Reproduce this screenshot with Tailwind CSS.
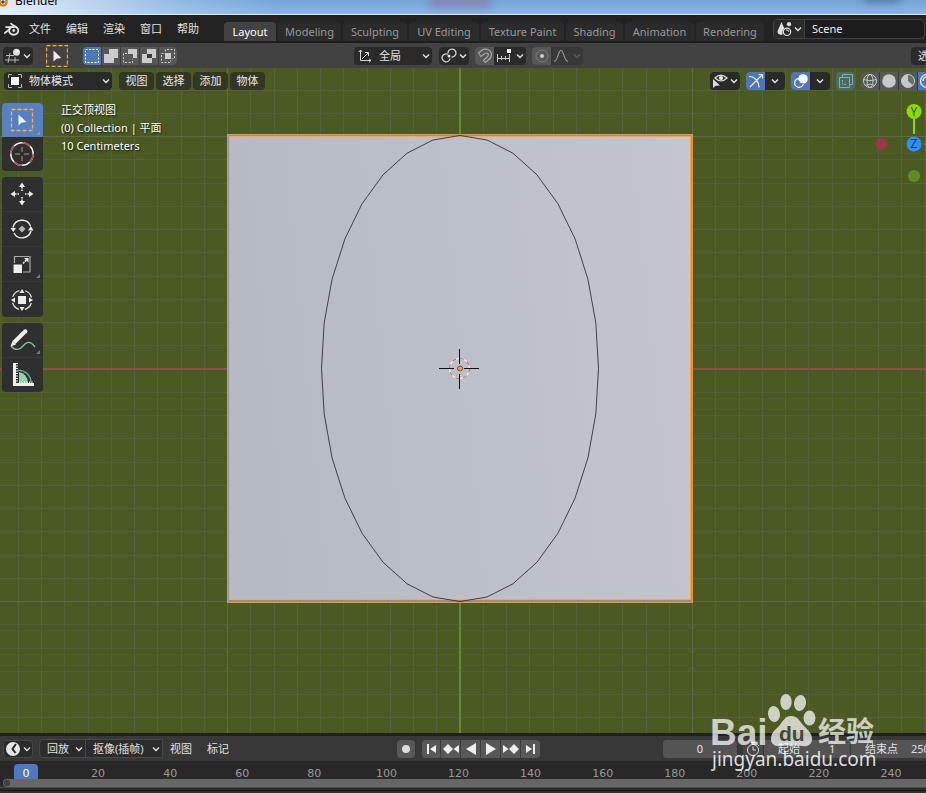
<!DOCTYPE html>
<html lang="zh-CN">
<head>
  <meta charset="UTF-8">
  <meta name="viewport" content="width=device-width, initial-scale=1.0">
  <title>Blender</title>
  <script src="https://cdn.jsdelivr.net/npm/@tailwindcss/browser@4"></script>
</head>
<body class="h-screen overflow-hidden bg-[#1f1f1f] font-['Noto_Sans','Noto_Sans_CJK_SC',sans-serif] text-[11px] leading-4 text-[#e0e0e0]">
  <svg class="hidden">
    <symbol id="chevron" viewBox="0 0 8 8"><path d="M1 2.5 4 5.5 7 2.5" fill="none" stroke="currentColor" stroke-width="1.4"/></symbol>
  </svg>

  <div class="relative flex h-full flex-col">
    <!-- Window title -->
    <div class="relative flex h-4 shrink-0 items-start overflow-hidden border-b border-[#16202b] bg-linear-to-b from-[#74a5da] to-[#8ab6e6]">
      <div class="absolute inset-0 bg-linear-to-r from-white/80 via-white/20 via-20% to-transparent to-30%"></div>
      <div class="absolute -top-1 left-[428px] h-3 w-16 rounded-full bg-[#8d6f9c]/60 blur-xs"></div>
      <div class="absolute -top-2 right-6 h-2.5 w-10 rounded-full bg-[#3d5f85]/70 blur-xs"></div>
      <svg class="relative -mt-1 h-3 w-3 -ml-1 shrink-0" viewBox="0 0 12 12"><circle cx="7" cy="6" r="3.6" fill="#fff" stroke="#e87d0d" stroke-width="2.4"/><circle cx="7" cy="6" r="1.8" fill="#265787"/></svg>
      <span class="relative -mt-[7px] ml-[7px] text-xs text-black">Blender</span>
      <div class="absolute inset-x-0 bottom-0 h-px bg-[#dcecfb]"></div>
    </div>

    <!-- Top bar -->
    <header class="flex h-[27px] shrink-0 items-start overflow-hidden border-b-2 border-[#1d1d1d] bg-[#232323]">
      <svg class="mt-1.5 ml-1 h-4 w-4 shrink-0" viewBox="0 0 16 16" fill="none" stroke="#e0e0e0" stroke-linecap="round">
        <ellipse cx="9.7" cy="8.6" rx="4.6" ry="4.1" stroke-width="1.9"/><path d="M7 1.6 12.8 5.7M2 5.1h8M.8 11 6.5 6.4" stroke-width="1.7"/><circle cx="9.8" cy="8.5" r="1.4" fill="#e0e0e0" stroke="none"/>
      </svg>
      <nav class="mt-[5px] ml-[9px] flex shrink-0 gap-[15px]">
        <button>文件</button><button>编辑</button><button>渲染</button><button>窗口</button><button>帮助</button>
      </nav>
      <nav class="mt-1.5 ml-[25px] flex h-[19px] shrink-0 gap-0.5 text-[#989898]">
        <button class="w-[52px] rounded-t bg-[#424242] text-white">Layout</button>
        <button class="w-[63px] rounded-t bg-[#2b2b2b]">Modeling</button>
        <button class="w-16 rounded-t bg-[#2b2b2b]">Sculpting</button>
        <button class="w-[70px] rounded-t bg-[#2b2b2b]">UV Editing</button>
        <button class="w-[83px] rounded-t bg-[#2b2b2b]">Texture Paint</button>
        <button class="w-[57px] rounded-t bg-[#2b2b2b]">Shading</button>
        <button class="w-[69px] rounded-t bg-[#2b2b2b]">Animation</button>
        <button class="w-[68px] rounded-t bg-[#2b2b2b]">Rendering</button>
      </nav>
      <div class="mt-[3px] mr-px ml-[9px] flex h-5 min-w-0 flex-1 overflow-hidden rounded border border-[#424242] bg-[#1d1d1d]">
        <button aria-label="Browse scene" class="flex w-[31px] shrink-0 items-center justify-center gap-0.5 border-r border-[#424242] bg-[#2a2a2a]">
          <svg class="h-4 w-4" viewBox="0 0 16 16" fill="#e0e0e0"><path d="M5.5 1 8.5 8C7 8 6 10 6.6 13.5 3 14.5.8 12 1.8 9.5Z"/><circle cx="13" cy="3.2" r="2.1"/><circle cx="11" cy="10.8" r="3.7" fill="#2a2a2a" stroke="#e0e0e0" stroke-width="1.2"/><path d="M10 9a2.4 2.4 0 0 1 3 2" stroke="#e0e0e0" fill="none"/></svg>
          <svg class="h-2 w-2"><use href="#chevron"/></svg>
        </button>
        <input aria-label="Scene name" value="Scene" class="w-full min-w-0 bg-transparent px-[7px] text-[#eee] outline-none">
      </div>
    </header>

    <!-- Tool settings -->
    <div class="flex h-[25px] shrink-0 items-center overflow-hidden bg-[#424242]">
      <button aria-label="Editor type" class="ml-[3px] flex h-[18px] w-[30px] shrink-0 items-center justify-center gap-0.5 rounded bg-[#2a2a2a]">
        <svg class="h-4 w-4" viewBox="0 0 16 16" fill="none" stroke="#b5b5b5"><path d="M1 7.5h8M0 12h14M5 5 3 15M10 9v6"/><circle cx="11.5" cy="4.2" r="3.5" fill="#dcdcdc" stroke="none"/><circle cx="12.5" cy="3" r="1" fill="#fff" stroke="none"/></svg>
        <svg class="h-2 w-2"><use href="#chevron"/></svg>
      </button>
      <button aria-label="Active tool" class="ml-[13px] shrink-0">
        <svg class="h-[22px] w-[22px]" viewBox="0 0 22 22"><rect x=".5" y=".5" width="21" height="21" fill="none" stroke="#ffa52e" stroke-width="1.3" stroke-dasharray="4 2"/><path d="M7.5 5.5v11l3-2.8 4.8-.8Z" fill="#eee"/></svg>
      </button>
      <div class="ml-[15px] flex h-[18px] shrink-0 gap-px overflow-hidden rounded bg-[#3a3a3a]">
        <button aria-label="Set" class="flex w-[18px] items-center justify-center bg-[#4f76b8]"><svg class="h-4 w-4" viewBox="0 0 16 16"><rect x="1.5" y="1.5" width="13" height="13" fill="none" stroke="#fff" stroke-dasharray="2 1.5"/></svg></button>
        <button aria-label="Extend" class="flex w-[18px] items-center justify-center bg-[#575757]"><svg class="h-4 w-4" viewBox="0 0 16 16"><path d="M6 1h9v9h-4v5H1V6h5Z" fill="#ccc"/></svg></button>
        <button aria-label="Subtract" class="flex w-[18px] items-center justify-center bg-[#575757]"><svg class="h-4 w-4" viewBox="0 0 16 16"><path d="M6 1h9v9h-4V6H6Z" fill="#ccc"/><path d="M5 5.5H1.5v9h9V11" fill="none" stroke="#ccc" stroke-dasharray="2 1.5"/></svg></button>
        <button aria-label="Invert" class="flex w-[18px] items-center justify-center bg-[#575757]"><svg class="h-4 w-4" viewBox="0 0 16 16"><path d="M6 1h9v9h-4v5H1V6h5Z" fill="#ccc"/><path d="M6 6h5v4H6Z" fill="#3a3a3a"/></svg></button>
        <button aria-label="Intersect" class="flex w-[18px] items-center justify-center bg-[#575757]"><svg class="h-4 w-4" viewBox="0 0 16 16"><path d="M5 5h6v6H5Z" fill="#ccc"/><path d="M5.5 3.5v-2h9v9h-2M3.5 5.5h-2v9h9v-2" fill="none" stroke="#ccc" stroke-dasharray="2 1.5"/></svg></button>
      </div>
      <div class="relative ml-[177px] h-[18px] w-[78px] shrink-0">
        <select aria-label="Transform orientation" class="h-full w-full appearance-none rounded bg-[#2a2a2a] pl-[25px] outline-none"><option>全局</option></select>
        <svg class="pointer-events-none absolute top-0.5 left-1 h-3.5 w-3.5" viewBox="0 0 14 14" fill="none" stroke="#d5d5d5"><path d="M2.5 1v10.5H13M.8 3 2.5 1l1.7 2M11 9.8l2 1.7-2 1.7M4 10l6-6M7 3.5h3.5V7"/></svg>
        <svg class="pointer-events-none absolute top-[5px] right-0.5 h-2 w-2"><use href="#chevron"/></svg>
      </div>
      <button aria-label="Pivot point" class="ml-[7px] flex h-[18px] w-[30px] shrink-0 items-center justify-center gap-0.5 rounded bg-[#2a2a2a]">
        <svg class="h-4 w-4" viewBox="0 0 16 16" fill="none" stroke="#d5d5d5" stroke-width="1.3"><path d="M7 6.3A4 4 0 1 0 9 10.5"/><path d="M7 5.5A4 4 0 1 1 10.5 9"/><circle cx="8" cy="8" r="1.5" fill="#eee" stroke="none"/></svg>
        <svg class="h-2 w-2"><use href="#chevron"/></svg>
      </button>
      <div class="ml-1.5 flex h-[18px] w-[51px] shrink-0 overflow-hidden rounded bg-[#2a2a2a]">
        <button aria-label="Snap" class="flex w-[19px] items-center justify-center bg-[#575757]"><svg class="h-4 w-4" viewBox="0 0 16 16" fill="none" stroke="#a8a8a8" stroke-width="1.2"><path d="M1.5 5 5 2.2C8 .2 12.5 1 14 4.5c1.3 3-.4 5.5-2.5 7.3L8.5 14.5 6.5 12.3l3.3-3c1.5-1.4 1.9-2.6 1.1-3.6-.8-1-2.2-.9-3.6.3L3.8 8.5Z"/></svg></button>
        <button aria-label="Snap to" class="flex flex-1 items-center justify-center gap-1"><svg class="h-4 w-4" viewBox="0 0 16 16"><path d="M1.5 6v8M5.5 8v4M9.5 8v4M13.5 6v8M1 10.5h13" stroke="#c8c8c8" fill="none"/><path d="M11 1h4v4h-4Z" fill="#fff"/></svg><svg class="h-2 w-2"><use href="#chevron"/></svg></button>
      </div>
      <div class="ml-1.5 flex h-[18px] w-[51px] shrink-0 overflow-hidden rounded bg-[#383838]">
        <button aria-label="Proportional editing" class="flex w-[19px] items-center justify-center bg-[#575757]"><svg class="h-4 w-4" viewBox="0 0 16 16"><circle cx="8" cy="8" r="6" fill="none" stroke="#7c7c7c"/><circle cx="8" cy="8" r="2" fill="#ccc"/></svg></button>
        <button aria-label="Falloff" class="flex flex-1 items-center justify-center gap-1 text-[#5d5d5d]"><svg class="h-4 w-4" viewBox="0 0 16 16"><path d="M1 13.5C5 13.5 5 2.5 8 2.5s3 11 7 11" fill="none" stroke="#999" stroke-width="1.2"/></svg><svg class="h-2 w-2"><use href="#chevron"/></svg></button>
      </div>
      <button class="-mr-6 ml-auto h-[18px] w-[39px] shrink-0 rounded bg-[#2a2a2a] pl-[7px] text-left">选项</button>
    </div>

    <!-- 3D viewport -->
    <main class="relative min-h-0 flex-1 overflow-hidden bg-[#4b5a22]">
      <svg class="absolute inset-0 h-full w-full" viewBox="0 68 926 665" preserveAspectRatio="xMidYMid slice">
        <defs>
          <linearGradient id="plane" x1="0" y1=".1" x2="1" y2="0"><stop offset="0" stop-color="#b5bac4"/><stop offset="1" stop-color="#c3c6cd"/></linearGradient>
        </defs>
        <g id="grid" shape-rendering="crispEdges"></g>
        <g shape-rendering="crispEdges">
          <rect x="0" y="368" width="926" height="1" fill="#b03a4c"/>
          <rect x="459" y="68" width="2" height="665" fill="#628a28"/>
          <!-- selected plane: outline, gap, outline, face -->
          <rect x="227" y="134" width="466" height="469" fill="#f0953a"/>
          <rect x="228" y="135" width="464" height="467" fill="#94928c"/>
          <rect x="229" y="136" width="462" height="464" fill="#ffa54a"/>
          <rect x="230" y="137" width="460" height="462" fill="url(#plane)"/>
        </g>
        <polygon id="outline" fill="none" stroke="#222" stroke-width=".8"/>
        <g fill="none">
          <circle cx="459.5" cy="368.5" r="10" stroke="#f2f2f2" stroke-width="1.2"/>
          <circle cx="459.5" cy="368.5" r="10" stroke="#ff5757" stroke-width="1.2" stroke-dasharray="3.93"/>
          <path d="M439 368.5h15M464 368.5h15M459.5 349v15M459.5 374v15" stroke="#111"/>
          <circle cx="460" cy="368.5" r="2.5" fill="#ff9a2e" stroke="#5a5a5a"/>
        </g>
      </svg>

      <div class="relative flex h-full flex-col">
        <div class="flex h-[26px] shrink-0 items-center text-[#e6e6e6]">
          <div class="relative ml-1 h-[18px] w-[108px] shrink-0">
            <select aria-label="Mode" class="h-full w-full appearance-none rounded bg-[#2a2a2a] pl-[25px] outline-none"><option>物体模式</option></select>
            <svg class="pointer-events-none absolute top-0.5 left-1 h-3.5 w-3.5" viewBox="0 0 14 14"><path d="M3 3h8v8H3Z" fill="#fff"/><path d="M.5 4V.5H4M10 .5h3.5V4M13.5 10v3.5H10M4 13.5H.5V10" fill="none" stroke="#b5b5b5"/></svg>
            <svg class="pointer-events-none absolute top-[5px] right-0.5 h-2 w-2"><use href="#chevron"/></svg>
          </div>
          <nav class="ml-[7px] flex shrink-0 gap-0.5">
            <button class="h-[18px] w-[35px] rounded bg-[#323624]">视图</button>
            <button class="h-[18px] w-[35px] rounded bg-[#323624]">选择</button>
            <button class="h-[18px] w-[35px] rounded bg-[#323624]">添加</button>
            <button class="h-[18px] w-[35px] rounded bg-[#323624]">物体</button>
          </nav>
          <div class="-mr-2.5 ml-auto flex h-[18px] shrink-0">
            <button aria-label="Visibility" class="flex w-[30px] items-center justify-center gap-0.5 rounded bg-[#2a2a2a]">
              <svg class="h-4 w-4" viewBox="0 0 16 16"><path d="M3 5Q9-.8 15 5 9 10.8 3 5Z" fill="none" stroke="#ddd" stroke-width="1.3"/><circle cx="9" cy="5" r="2.1" fill="#eee"/><path d="M1 6v9l2.5-2.2L8 12.5Z" fill="#ddd"/></svg>
              <svg class="h-2 w-2"><use href="#chevron"/></svg>
            </button>
            <div class="ml-1.5 flex w-[39px] overflow-hidden rounded bg-[#2a2a2a]">
              <button aria-label="Gizmos" class="flex w-[19px] items-center justify-center bg-[#4f76b8]"><svg class="h-4 w-4" viewBox="0 0 16 16" fill="none" stroke="#eee" stroke-width="1.2"><path d="M1 3.5c6 0 10 5 10 11M2 14 14.5 1.5M10.5 1.5h4v4"/></svg></button>
              <button aria-label="Gizmo options" class="flex flex-1 items-center justify-center"><svg class="h-2 w-2"><use href="#chevron"/></svg></button>
            </div>
            <div class="ml-1.5 flex w-[39px] overflow-hidden rounded bg-[#2a2a2a]">
              <button aria-label="Overlays" class="flex w-[19px] items-center justify-center bg-[#4f76b8]"><svg class="h-4 w-4" viewBox="0 0 16 16"><circle cx="10" cy="6" r="4.8" fill="#fff"/><circle cx="6" cy="10" r="4.3" fill="none" stroke="#fff" stroke-width="1.2"/><path d="M5.5 7.5a4.7 4.7 0 0 0 5 3.2" fill="none" stroke="#4f76b8"/></svg></button>
              <button aria-label="Overlay options" class="flex flex-1 items-center justify-center"><svg class="h-2 w-2"><use href="#chevron"/></svg></button>
            </div>
            <button aria-label="X-ray" class="ml-1.5 flex w-[19px] items-center justify-center rounded bg-[#4b6a66]"><svg class="h-4 w-4" viewBox="0 0 16 16" fill="none" stroke="#7fb0ad"><path d="M4.5 4.5V1.5h10v10h-3M1.5 4.5h10v10h-10Z"/><path d="M4.5 7v4.5H9" stroke-dasharray="2 1"/></svg></button>
            <div class="ml-1.5 flex gap-px overflow-hidden rounded bg-[#3a3a3a]">
              <button aria-label="Wireframe" class="flex w-[18px] items-center justify-center bg-[#575757]"><svg class="h-4 w-4" viewBox="0 0 16 16" fill="none" stroke="#c8c8c8"><circle cx="8" cy="8" r="6.5"/><ellipse cx="8" cy="8" rx="3" ry="6.5"/><path d="M1.5 6.5Q8 9 14.5 6.5M3 12.5Q8 9.5 13 12.5"/></svg></button>
              <button aria-label="Solid" class="flex w-[18px] items-center justify-center bg-[#575757]"><svg class="h-4 w-4" viewBox="0 0 16 16"><circle cx="8" cy="8" r="6.8" fill="#c8c8c8"/></svg></button>
              <button aria-label="Material" class="flex w-[18px] items-center justify-center bg-[#575757]"><svg class="h-4 w-4" viewBox="0 0 16 16"><circle cx="8" cy="8" r="6.5" fill="#c8c8c8" stroke="#c8c8c8"/><path d="M8 2v6l4.5 4A6 6 0 0 0 8 2Z" fill="#6d6d6d"/></svg></button>
              <button aria-label="Rendered" class="flex w-[18px] items-center justify-center bg-[#4f76b8]"><svg class="h-4 w-4" viewBox="0 0 16 16" fill="none" stroke="#fff" stroke-width="1.2"><circle cx="8" cy="8" r="6.5"/><path d="M4 8a4 4 0 0 1 4-4"/></svg></button>
            </div>
          </div>
        </div>

        <div class="mt-[9px] ml-0.5 flex items-start">
          <div class="flex w-[41px] flex-col gap-1.5">
            <div class="flex flex-col overflow-hidden rounded bg-[#2f2f2f]">
              <button aria-label="Select box" class="relative flex h-[34px] items-center justify-center bg-[#5680c2] pr-0.5">
                <svg class="h-6 w-6" viewBox="0 0 24 24"><rect x="1.5" y="1.5" width="21" height="21" fill="none" stroke="#ffb13d" stroke-width="1.3" stroke-dasharray="4 2"/><path d="M8.5 6.5v11l3-2.8 5-.7Z" fill="#eee"/></svg>
                <svg class="absolute right-[3px] bottom-0.5 h-1 w-1" viewBox="0 0 4 4"><path d="M4 0v4H0Z" fill="#8b98ad"/></svg>
              </button>
              <button aria-label="Cursor" class="flex h-[34px] items-center justify-center pr-0.5">
                <svg class="h-7 w-7" viewBox="0 0 28 28" fill="none"><circle cx="14" cy="14" r="11.2" stroke="#f0f0f0" stroke-width="1.5"/><circle cx="14" cy="14" r="11.2" stroke="#b04a52" stroke-width="1.5" stroke-dasharray="8.8"/><path d="M14 7v5M14 16v5M7 14h5M16 14h5" stroke="#9a9a9a"/></svg>
              </button>
            </div>
            <div class="flex flex-col divide-y divide-[#383838] overflow-hidden rounded bg-[#2f2f2f]">
              <button aria-label="Move" class="flex h-[35px] items-center justify-center pr-0.5">
                <svg class="h-6 w-6" viewBox="0 0 24 24" fill="#ececec"><path d="m12 .5 3 4.5H9ZM12 23.5l3-4.5H9ZM.5 12 5 9v6ZM23.5 12 19 9v6Z"/><path d="M12 5v4M12 15v4M5 12h4M15 12h4" stroke="#ececec" stroke-width="1.6" stroke-dasharray="1.5 1"/></svg>
              </button>
              <button aria-label="Rotate" class="flex h-[35px] items-center justify-center pr-0.5">
                <svg class="h-6 w-6" viewBox="0 0 24 24"><path d="M3 10.5A9.2 9.2 0 0 1 20.5 9M21 14A9.2 9.2 0 0 1 4 16" fill="none" stroke="#ececec" stroke-width="1.4"/><path d="M.5 11h5.5l-2.7 4ZM18 13.5h5.5L20.8 9Z" fill="#ececec"/><path d="m12 8.5 3.5 3.5-3.5 3.5L8.5 12Z" fill="#b5b5b5"/></svg>
              </button>
              <button aria-label="Scale" class="relative flex h-[35px] items-center justify-center pr-0.5">
                <svg class="h-5 w-5" viewBox="0 0 20 20"><path d="M2.5 9V2.5H18V18H11" fill="none" stroke="#a8a8a8" stroke-width="1.2"/><path d="M1.5 10.5h8.5v8.5H1.5Z" fill="#eee"/><path d="m11 9.5 4-4" stroke="#eee" stroke-width="1.6" stroke-dasharray="2 .7"/><path d="M16.5 4v4.5L12 4Z" fill="#eee"/></svg>
                <svg class="absolute right-[3px] bottom-[3px] h-1 w-1" viewBox="0 0 4 4"><path d="M4 0v4H0Z" fill="#777"/></svg>
              </button>
              <button aria-label="Transform" class="flex h-[35px] items-center justify-center pr-0.5">
                <svg class="h-6 w-6" viewBox="0 0 24 24"><circle cx="12" cy="12" r="9.8" fill="none" stroke="#ddd" stroke-width="1.3" stroke-dasharray="9.4 6" stroke-dashoffset="-3"/><path d="M8 8h8v8H8Z" fill="#ececec"/><path d="m12 1 2.5 4h-5ZM12 23l2.5-4h-5ZM1 12l4-2.5v5ZM23 12l-4-2.5v5Z" fill="#ececec"/></svg>
              </button>
            </div>
            <div class="flex flex-col divide-y divide-[#383838] overflow-hidden rounded bg-[#2f2f2f]">
              <button aria-label="Annotate" class="relative flex h-[35px] items-center justify-center pr-0.5">
                <svg class="h-6 w-7" viewBox="0 0 28 24"><path d="M3 18c4 5 9 4 12 0s7-6 12 1" fill="none" stroke="#7cc4a0" stroke-width="1.3"/><path d="m6 14.5 10-10" stroke="#eee" stroke-width="4"/><path d="M2.5 18.5 4.5 13l3.5 3.5Z" fill="#eee"/><circle cx="17.2" cy="3.5" r="2.2" fill="#eee"/></svg>
                <svg class="absolute right-[3px] bottom-[3px] h-1 w-1" viewBox="0 0 4 4"><path d="M4 0v4H0Z" fill="#777"/></svg>
              </button>
              <button aria-label="Measure" class="flex h-[34px] items-center justify-center pr-0.5">
                <svg class="h-6 w-6" viewBox="0 0 24 24"><path d="M9 9a11 11 0 0 1 9 11H9Z" fill="#8fd6b0"/><path d="M8 7.5a12 12 0 0 1 13 12.5" fill="none" stroke="#6fae8f" stroke-width="1.3"/><path d="M4.5 0v22M3 21.5h21" stroke="#eee" stroke-width="3"/><path d="M7 0v19" stroke="#eee" stroke-width="2" stroke-dasharray="1 1.5"/><path d="M9 19.5h15" stroke="#eee" stroke-width="2" stroke-dasharray="1 1.5"/></svg>
              </button>
            </div>
          </div>
          <div class="-mt-0.5 ml-[18px] leading-[18px] text-white text-shadow-[1px_1px_2px_rgb(0_0_0_/_0.8)]">
            <p>正交顶视图</p>
            <p>(0) Collection | 平面</p>
            <p>10 Centimeters</p>
          </div>
        </div>
      </div>

      <!-- Navigation axes -->
      <svg class="absolute top-[34px] right-0 h-[82px] w-[54px]" viewBox="872 102 54 82" font-family="Noto Sans" font-size="12" text-anchor="middle">
        <path d="M914 112v22" stroke="#8cdc00" stroke-width="2"/>
        <path d="M924 144h2" stroke="#ff3653" stroke-width="2"/>
        <circle cx="914" cy="111.5" r="7.5" fill="#8cdc00"/><text x="914" y="116" fill="#355400">Y</text>
        <circle cx="914" cy="144" r="7.5" fill="#2c8fff"/><text x="914" y="148" fill="#103763">Z</text>
        <circle cx="881.5" cy="144" r="6" fill="#9c3848"/>
        <circle cx="914" cy="176" r="6" fill="#608c20"/>
      </svg>
    </main>

    <!-- Timeline -->
    <footer class="mt-[3px] shrink-0 bg-[#282828]">
      <div class="flex h-[25px] items-center overflow-hidden bg-[#383838]">
        <button aria-label="Editor type" class="ml-[3px] flex h-[18px] w-[30px] shrink-0 items-center justify-center gap-0.5 rounded border border-[#474747] bg-[#2a2a2a]">
          <svg class="h-4 w-4 shrink-0" viewBox="0 0 16 16"><circle cx="8" cy="8" r="7" fill="#e5e5e5"/><path d="M11 3 7.5 8l3 4" fill="none" stroke="#2a2a2a" stroke-width="2"/></svg>
          <svg class="h-2 w-2 shrink-0"><use href="#chevron"/></svg>
        </button>
        <div class="ml-1.5 flex h-[19px] w-[124px] shrink-0 rounded-l border border-[#474747] bg-[#2c2c2c]">
          <button class="flex w-[46px] items-center justify-between border-r border-[#474747] pr-0.5 pl-[7px]">回放<svg class="h-2 w-2"><use href="#chevron"/></svg></button>
          <button class="flex flex-1 items-center justify-between pr-0.5 pl-[7px] whitespace-nowrap">抠像(插帧)<svg class="h-2 w-2"><use href="#chevron"/></svg></button>
        </div>
        <nav class="ml-[7px] flex shrink-0 gap-[15px]"><button>视图</button><button>标记</button></nav>
        <button aria-label="Auto keying" class="ml-[168px] flex h-[18px] w-[18px] shrink-0 items-center justify-center rounded bg-[#585858]"><svg class="h-2 w-2" viewBox="0 0 8 8"><circle cx="4" cy="4" r="4" fill="#ddd"/></svg></button>
        <div class="ml-[7px] flex h-[18px] shrink-0 gap-px overflow-hidden rounded bg-[#3c3c3c]">
          <button aria-label="Jump to start" class="flex w-[18px] items-center justify-center bg-[#585858]"><svg class="h-3 w-3" viewBox="0 0 12 12"><path d="M3 1v10" stroke="#eee" stroke-width="2"/><path d="M11 2v8L5 6Z" fill="#eee"/></svg></button>
          <button aria-label="Previous keyframe" class="flex w-[19px] items-center justify-center bg-[#585858]"><svg class="h-3 w-4" viewBox="0 0 16 12"><path d="m5 1 5 5-5 5-5-5ZM16 2v8l-5.5-4Z" fill="#eee"/></svg></button>
          <button aria-label="Play reverse" class="flex w-[19px] items-center justify-center bg-[#585858]"><svg class="h-3 w-3" viewBox="0 0 12 12"><path d="M11 0v12L1 6Z" fill="#eee"/></svg></button>
          <button aria-label="Play" class="flex w-[19px] items-center justify-center bg-[#585858]"><svg class="h-3 w-3" viewBox="0 0 12 12"><path d="M1 0v12l10-6Z" fill="#eee"/></svg></button>
          <button aria-label="Next keyframe" class="flex w-[19px] items-center justify-center bg-[#585858]"><svg class="h-3 w-4" viewBox="0 0 16 12"><path d="m11 1 5 5-5 5-5-5ZM0 2v8l5.5-4Z" fill="#eee"/></svg></button>
          <button aria-label="Jump to end" class="flex w-[19px] items-center justify-center bg-[#585858]"><svg class="h-3 w-3" viewBox="0 0 12 12"><path d="M9 1v10" stroke="#eee" stroke-width="2"/><path d="M1 2v8l6-4Z" fill="#eee"/></svg></button>
        </div>
        <div class="-mr-[15px] ml-auto flex h-[18px] shrink-0">
          <input aria-label="Current frame" value="0" class="w-[74px] rounded bg-[#545454] text-center outline-none">
          <button aria-label="Preview range" class="ml-1.5 flex w-[20px] items-center justify-center rounded-l bg-[#484848]"><svg class="h-4 w-4" viewBox="0 0 16 16" fill="none" stroke="#ddd"><circle cx="8" cy="9" r="5.5"/><path d="M8 5.5V9h3M6 1.5h4M8 1.5v2M12.5 3.5l1.5 1.5"/></svg></button>
          <label class="ml-px flex w-[86px] items-center bg-[#545454] pl-[14px]">起始<input value="1" class="w-12 min-w-0 bg-transparent pl-[29px] outline-none"></label>
          <label class="ml-px flex w-[90px] items-center bg-[#545454] pl-[14px]"><span class="shrink-0">结束点</span><input value="250" class="w-full min-w-0 bg-transparent pl-[13px] outline-none"></label>
        </div>
      </div>
      <div class="flex h-[18px] overflow-hidden pt-[3px] font-['DejaVu_Sans',sans-serif] leading-5 text-[#9a9a9a]">
        <div class="-mr-px -ml-2.5 grid flex-1 grid-cols-13 text-center">
          <span><span class="inline-block w-6 rounded-t bg-[#5078bf] text-white">0</span></span>
          <span>20</span><span>40</span><span>60</span><span>80</span><span>100</span><span>120</span><span>140</span><span>160</span><span>180</span><span>200</span><span>220</span><span>240</span>
        </div>
      </div>
      <div class="ml-[3px] flex h-2 items-center rounded-l-full bg-[#666] pl-px"><span class="h-1.5 w-1.5 rounded-full bg-[#3c3c3c]"></span></div>
      <div class="h-[3px] border-t border-[#4a4a4a] bg-[#2a2a2a]"></div>
      <div class="h-[3px] border-t border-[#1a1a1a] bg-[#303030]"></div>
    </footer>

    <!-- Watermark -->
    <svg class="pointer-events-none absolute right-11 bottom-[18px] h-[85px] w-[176px]" viewBox="706 690 176 85" fill="#fff" fill-opacity=".72">
      <text x="710" y="745" font-family="Liberation Sans" font-weight="bold" font-size="37">Bai</text>
      <ellipse cx="774" cy="714" rx="6" ry="8" transform="rotate(-8 774 714)"/>
      <ellipse cx="786" cy="702" rx="5.7" ry="8"/>
      <ellipse cx="800" cy="703" rx="6" ry="8" transform="rotate(10 800 703)"/>
      <ellipse cx="809.5" cy="718" rx="6" ry="7.5"/>
      <path d="M791 716c7 0 9 6 13 10 5 5 8 8 8 13 0 6-5 8-10 7-7-1-14-1-21 0-6 1-10-2-10-7 0-6 4-9 8-13 4-5 6-10 12-10Z"/>
      <text x="779" y="741" font-family="Liberation Sans" font-weight="bold" font-size="21" fill="#434a2c" fill-opacity="1">du</text>
      <text x="818" y="742" font-family="Noto Sans CJK SC" font-weight="bold" font-size="28">经验</text>
      <text x="712" y="766" font-family="Noto Sans" font-size="19" fill-opacity=".85">jingyan.baidu.com</text>
    </svg>
  </div>

  <script>
    const svgNS = 'http://www.w3.org/2000/svg';
    const grid = document.getElementById('grid');
    const center = { x: 460, y: 369 };
    const step = 23.25;

    function addLine(d, color) {
      const line = document.createElementNS(svgNS, 'path');
      line.setAttribute('d', d);
      line.setAttribute('stroke', color);
      grid.appendChild(line);
    }

    for (let i = -20; i <= 20; i++) {
      const color = i % 10 === 0 ? '#5f6a49' : '#55613c';
      const x = Math.floor(center.x + i * step) + 0.5;
      const y = Math.floor(center.y + i * step) + 0.5;
      addLine(`M${x} 68V733`, color);
      addLine(`M0 ${y}H926`, color);
    }

    // 32-sided circle, scaled along X
    const points = [];
    for (let i = 0; i < 32; i++) {
      const a = (i / 32) * Math.PI * 2;
      points.push(`${center.x + 138.5 * Math.sin(a)},${center.y - 0.5 - 233 * Math.cos(a)}`);
    }
    document.getElementById('outline').setAttribute('points', points.join(' '));
  </script>
</body>
</html>
